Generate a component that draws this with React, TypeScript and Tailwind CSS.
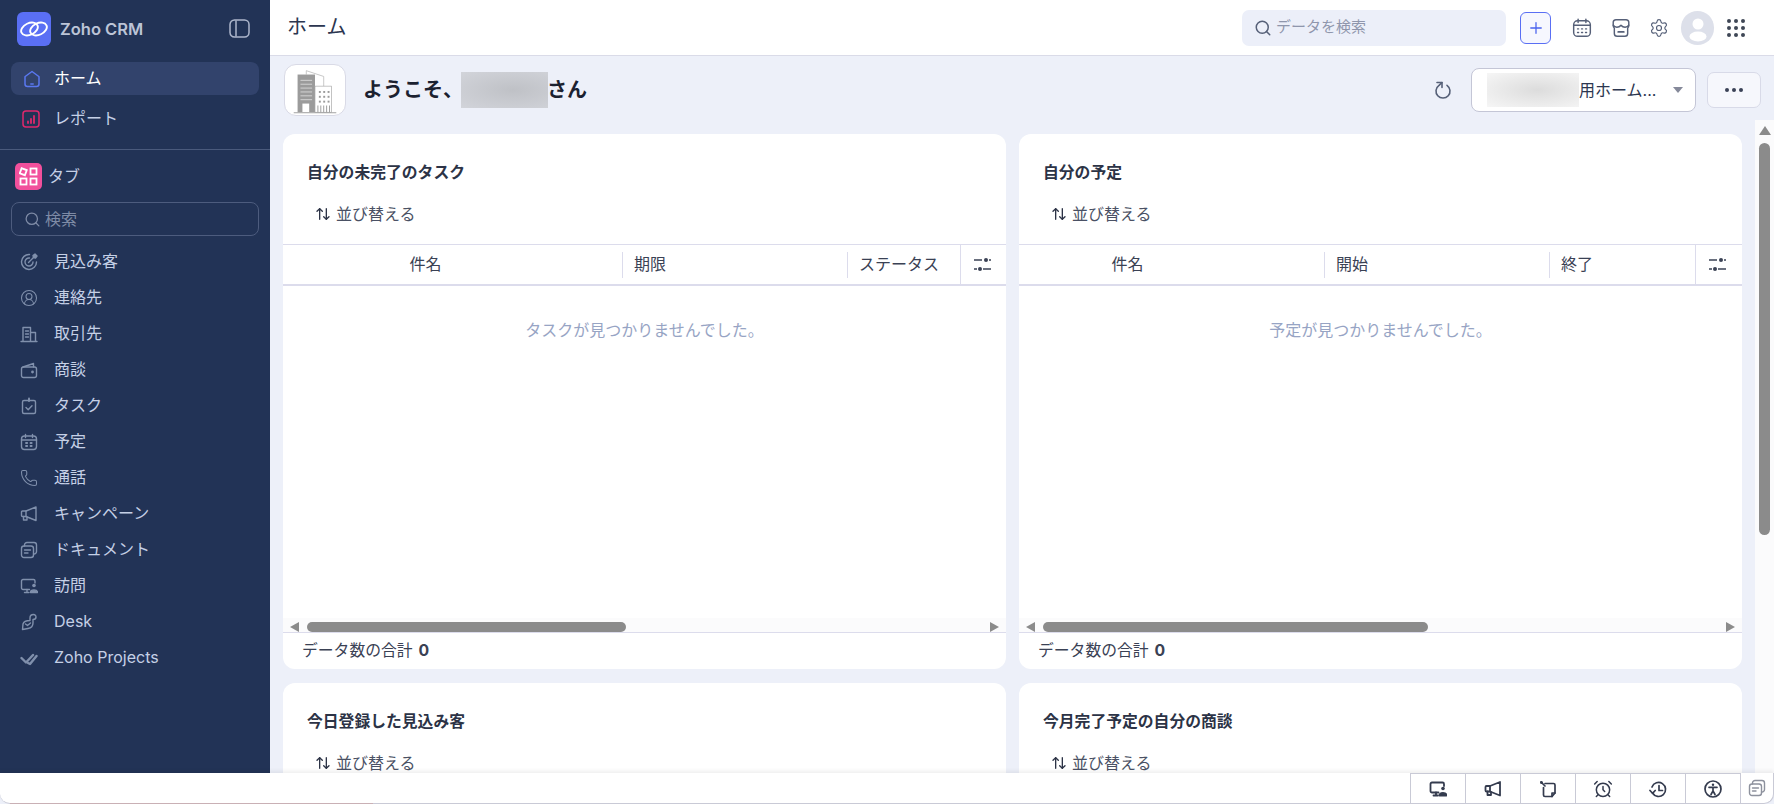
import { Search, Settings, Phone, Plus, CircleUserRound, ArrowUpDown, AlarmClock } from "lucide-react";
import type { ReactNode } from "react";

const FONT = "font-['Inter','Noto_Sans_CJK_JP',sans-serif]";

function Icon18({ children, size = 18, sw = 1.4 }: { children: ReactNode; size?: number; sw?: number }) {
  return (
    <svg
      width={size}
      height={size}
      viewBox="0 0 18 18"
      fill="none"
      stroke="currentColor"
      strokeWidth={sw}
      strokeLinecap="round"
      strokeLinejoin="round"
      className="shrink-0"
    >
      {children}
    </svg>
  );
}

const LeadIcon = () => (
  <Icon18>
    <path d="M9.500 1.500a7.500 7.500 0 1 0 7 7.500" />
    <path d="M9.500 5a4 4 0 1 0 3.500 4" />
    <path d="M8.500 9.500 14 4" />
    <path d="M13 2.500 13.500 4.500 15.500 5 17 3 15 1z" fill="currentColor" />
  </Icon18>
);
const ContactIcon = () => <CircleUserRound size={18} strokeWidth={1.4} />;
const BuildingIcon = () => (
  <Icon18>
    <path d="M3 16V2.500h7.500V16" />
    <path d="M10.500 7.500h5V16" />
    <path d="M1 16.500h16" />
    <path d="M5.500 6h3M5.500 9h3M5.500 12h3" />
  </Icon18>
);
const WalletIcon = () => (
  <Icon18>
    <rect x="1.500" y="6" width="15" height="10.500" rx="2" />
    <path d="M3 6 13.500 2.500V6" />
    <circle cx="12.500" cy="11" r="0.700" fill="currentColor" />
  </Icon18>
);
const TaskIcon = () => (
  <Icon18>
    <rect x="2.500" y="3.500" width="13" height="13" rx="1.500" />
    <path d="M9 1.500v2.500" strokeWidth="2" />
    <path d="m6 10.500 2.200 2.200 3.800-4" />
  </Icon18>
);
const CalendarIcon = () => (
  <Icon18>
    <rect x="1.500" y="3" width="15" height="13.500" rx="3" />
    <path d="M1.500 7h15M5.500 1.500v3M12.500 1.500v3" />
    <path d="M6 10h1.200M10.500 10h1.200M6 13h1.200M10.500 13h1.200" strokeWidth="1.800" />
  </Icon18>
);
const CallIcon = () => <Phone size={18} strokeWidth={1.4} />;
const CampaignIcon = ({ sw = 1.4 }: { sw?: number }) => (
  <Icon18 sw={sw}>
    <path d="M16 2 6 6H2.500a1 1 0 0 0-1 1v3.500a1 1 0 0 0 1 1H6l10 4z" />
    <path d="M6 6v5.500" />
    <path d="M3.500 11.500v3.500H7v-3" />
  </Icon18>
);
const DocIcon = () => (
  <Icon18>
    <rect x="1.500" y="5" width="12" height="11.500" rx="2.500" />
    <path d="M4.500 5V4a2.500 2.500 0 0 1 2.500-2.500h7A2.500 2.500 0 0 1 16.500 4v6.500A2.500 2.500 0 0 1 14 13h-.500" />
    <path d="M4.500 9h6M4.500 12h3.500" />
  </Icon18>
);
const VisitIcon = ({ sw = 1.4 }: { sw?: number }) => (
  <Icon18 sw={sw}>
    <path d="M9.500 12.500H3A1.500 1.500 0 0 1 1.500 11V4A1.500 1.500 0 0 1 3 2.500h10.500A1.500 1.500 0 0 1 15 4v2" />
    <path d="M7 12.500v3M4.500 15.500H9" />
    <circle cx="14" cy="8.500" r="1.800" fill="currentColor" stroke="none" />
    <path d="M10.500 15.500c0-3.500 7-3.500 7 0z" fill="currentColor" />
  </Icon18>
);
const DeskIcon = () => (
  <Icon18>
    <path d="M13.500 1.500c-2.500 0-3.500 1.200-3.500 3.500v2.500C6.500 7.500 3.500 9 3 11l-.500 5.500 5.500-1c3-.5 5-2.500 5-5.500V6.500c2 0 3-1 3-2.500 0-1.500-1-2.500-2.500-2.500z" />
    <path d="m5.500 11 2 1.500 3-2.500" />
  </Icon18>
);
const ProjectIcon = () => (
  <Icon18 sw={2.4}>
    <path d="m1.500 9 4.500 4.500L13 6" />
    <path d="m8 14 2 1 6.500-8" />
  </Icon18>
);

const navItems = [
  { label: "見込み客", icon: <LeadIcon /> },
  { label: "連絡先", icon: <ContactIcon /> },
  { label: "取引先", icon: <BuildingIcon /> },
  { label: "商談", icon: <WalletIcon /> },
  { label: "タスク", icon: <TaskIcon /> },
  { label: "予定", icon: <CalendarIcon /> },
  { label: "通話", icon: <CallIcon /> },
  { label: "キャンペーン", icon: <CampaignIcon /> },
  { label: "ドキュメント", icon: <DocIcon /> },
  { label: "訪問", icon: <VisitIcon /> },
  { label: "Desk", icon: <DeskIcon /> },
  { label: "Zoho Projects", icon: <ProjectIcon /> },
];

function ZohoLogo() {
  return (
    <div className="flex h-[34px] w-[34px] items-center justify-center rounded-[6px] bg-[#5a6ff4]">
      <svg width="28" height="20" viewBox="0 0 28 20" fill="none" stroke="white" strokeWidth="1.900">
        <ellipse cx="9.500" cy="10" rx="8.800" ry="5.800" transform="rotate(-25 9.500 10)" />
        <ellipse cx="18.500" cy="10" rx="8.800" ry="5.800" transform="rotate(-25 18.500 10)" />
      </svg>
    </div>
  );
}

function Sidebar() {
  return (
    <aside className="flex w-[270px] shrink-0 flex-col bg-[#223356]">
      <div className="flex h-[62px] items-start justify-between pl-[17px] pr-[19px] pt-[12px]">
        <div className="flex items-center gap-[9px]">
          <ZohoLogo />
          <span className="text-[16.500px] font-semibold text-[#bcc4d6]">Zoho CRM</span>
        </div>
        <svg width="22" height="20" viewBox="0 0 22 20" fill="none" stroke="#aeb7cc" strokeWidth="1.500" className="mt-[7px]">
          <rect x="1" y="1" width="19" height="17" rx="4.500" />
          <path d="M7 1.500v16" />
        </svg>
      </div>
      <div className="px-[11px]">
        <div className="flex h-[33px] items-center gap-[13px] rounded-[8px] bg-[#32436c] pl-[12px] text-[#5a78f0]">
          <Icon18 sw={1.5}>
            <path d="M9 1.500 15.800 6.500a1 1 0 0 1 .200.600V14a2.500 2.500 0 0 1-2.500 2.500h-9A2.500 2.500 0 0 1 2 14V7.100a1 1 0 0 1 .200-.600z" />
            <path d="M7.800 14h2.400" />
          </Icon18>
          <span className="pb-[2px] text-[16px] text-white">ホーム</span>
        </div>
        <div className="mt-[7px] flex h-[33px] items-center gap-[14px] pl-[11px] text-[#e0296c]">
          <Icon18 sw={1.5}>
            <rect x="1" y="1" width="16" height="16" rx="3" />
            <path d="M6 13v-1.500M9 13V9M12 13V6" strokeWidth="1.800" />
          </Icon18>
          <span className="pb-[2px] text-[16px] text-[#c5d0e6]">レポート</span>
        </div>
      </div>
      <div className="mt-[14px] border-t border-[#4a5a7c]" />
      <div className="mt-[13px] flex items-center gap-[6px] pl-[15px]">
        <div className="flex h-[27px] w-[27px] items-center justify-center rounded-[5px] bg-[#f2509c]">
          <svg width="19" height="19" viewBox="0 0 19 19" fill="none" stroke="white" strokeWidth="1.800">
            <rect x="1.500" y="2" width="5.500" height="5.500" transform="rotate(20 4.250 4.750)" />
            <rect x="11.500" y="1.500" width="6" height="6" />
            <rect x="1.500" y="11.500" width="6" height="6" />
            <rect x="11.500" y="11.500" width="6" height="6" />
          </svg>
        </div>
        <span className="pb-[2px] text-[16px] text-[#c5d0e6]">タブ</span>
      </div>
      <div className="mx-[11px] mt-[12px] flex h-[34px] items-center gap-[4px] rounded-[8px] border border-[#4d5c7e] pl-[12px]">
        <Search size={17} strokeWidth={1.8} className="text-[#7e8ba6]" />
        <span className="text-[16px] text-[#7e8ba6]">検索</span>
      </div>
      <div className="mt-[8px]">
        {navItems.map(({ label, icon }) => (
          <div key={label} className="flex h-[36px] items-center gap-[16px] pl-[20px]">
            <span className="text-[#8090ac]">{icon}</span>
            <span className="pb-[2px] text-[16px] text-[#c5d0e6]">{label}</span>
          </div>
        ))}
      </div>
    </aside>
  );
}

function TopBar() {
  return (
    <header className="flex h-[56px] shrink-0 items-center justify-between border-b border-[#dadbe8] bg-white pl-[17px] pr-[29px]">
      <span className="pb-[2px] text-[20px] text-[#2c3650]">ホーム</span>
      <div className="flex items-center text-[#566078]">
        <div className="flex h-[36px] w-[264px] items-center gap-[4px] rounded-[7px] bg-[#eceff9] pl-[12px]">
          <Search size={18} strokeWidth={2} className="text-[#566078]" />
          <span className="text-[15px] text-[#8f96ac]">データを検索</span>
        </div>
        <div className="ml-[14px] flex h-[32px] w-[31px] items-center justify-center rounded-[6px] border border-[#5a6ff4] bg-[#f6f7fe]">
          <Plus size={18} strokeWidth={1.7} className="text-[#4a63ee]" />
        </div>
        <div className="ml-[21px]">
          <Icon18 size={20} sw={1.3}>
            <rect x="1.500" y="2.500" width="15" height="14" rx="3.500" />
            <path d="M1.500 6.500h15M5.500 1v3M12.500 1v3" />
            <path d="M5 9.800h.9M8.600 9.800h.9M12.200 9.800h.9M5 13h.9M8.600 13h.9M12.200 13h.9" />
          </Icon18>
        </div>
        <div className="ml-[19px]">
          <Icon18 size={20} sw={1.3}>
            <path d="M4.500 1.500h9a2.500 2.500 0 0 1 2.500 2V7a2.500 2.500 0 0 1-1 2v5a2.500 2.500 0 0 1-2.500 2.500h-7A2.500 2.500 0 0 1 3 14V9a2.500 2.500 0 0 1-1-2V3.500a2.500 2.500 0 0 1 2.500-2z" />
            <path d="M2 6.500c1.500 2.500 5 2.500 7 0 2 2.500 5.500 2.500 7 0" />
            <path d="M6.500 12.500h5" strokeWidth="1.600" />
          </Icon18>
        </div>
        <Settings size={20} strokeWidth={1.4} className="ml-[18px]" />
        <div className="ml-[12px] flex h-[34px] w-[33px] items-center justify-center overflow-hidden rounded-full bg-[#dde0ea]">
          <svg width="24" height="28" viewBox="0 0 24 28" fill="white">
            <circle cx="12" cy="10" r="5.500" />
            <ellipse cx="12" cy="22.500" rx="8.500" ry="5" />
          </svg>
        </div>
        <svg width="18" height="18" viewBox="0 0 18 18" fill="#3f4756" className="ml-[13px]">
          {[2, 9, 16].map((y) =>
            [2, 9, 16].map((x) => <circle key={`${x}-${y}`} cx={x} cy={y} r="2" />)
          )}
        </svg>
      </div>
    </header>
  );
}

function BuildingLogo() {
  return (
    <svg width="62" height="51" viewBox="0 0 62 51">
      <path d="M22 9V5l18 6v11" fill="none" stroke="#b8b8b8" strokeWidth="0.800" />
      <rect x="13" y="9" width="18" height="39" fill="#9b9b9b" />
      <path d="M16 15h12M16 19h12M16 23h12M16 27h12M16 31h12M16 35h12" stroke="#d4d4d4" strokeWidth="1" />
      <rect x="18" y="39" width="7" height="9" fill="white" />
      <rect x="31" y="21" width="17" height="27" fill="white" stroke="#a8a8a8" strokeWidth="0.700" />
      {[26, 31, 36].map((y) =>
        [35, 39.500, 44].map((x) => <rect key={`${x}-${y}`} x={x} y={y} width="2" height="2" fill="#9b9b9b" />)
      )}
      <path d="M34 41v7M37 41v7M40 41v7M43 41v7M46 41v7" stroke="#9b9b9b" strokeWidth="1" />
      <rect x="9" y="48" width="44" height="1" fill="#a0a0a0" />
    </svg>
  );
}

function WelcomeRow() {
  return (
    <div className="flex h-[68px] shrink-0 items-center justify-between pl-[14px] pr-[13px]">
      <div className="flex items-center">
        <div className="flex h-[52px] w-[62px] items-center justify-center overflow-hidden rounded-[12px] border border-[#d9dae6] bg-white">
          <BuildingLogo />
        </div>
        <span className="ml-[17px] mr-[-2px] text-[20px] font-semibold text-[#1b2130]">ようこそ、</span>
        <div className="mr-[-1px] h-[36px] w-[87px] bg-[radial-gradient(ellipse_at_60%_50%,#bfc1c6,#d2d4da)]" />
        <span className="text-[20px] font-semibold text-[#1b2130]">さん</span>
      </div>
      <div className="flex items-center">
        <svg width="18" height="18" viewBox="0 0 18 18" fill="none" stroke="#566078" strokeWidth="1.600" strokeLinecap="round" strokeLinejoin="round">
          <path d="M13 4.300A7 7 0 1 1 5 4.300L8 1.500" />
          <path d="M3 1.500h5v5" />
        </svg>
        <div className="ml-[19px] flex h-[44px] w-[225px] items-center justify-between rounded-[8px] border border-[#c4c6d6] bg-white pl-[15px] pr-[12px]">
          <div className="flex items-center">
            <div className="h-[34px] w-[92px] bg-[radial-gradient(ellipse_at_55%_50%,#dcdcdc,#f6f6f6)]" />
            <span className="text-[16px] text-[#2c3650]">用ホーム...</span>
          </div>
          <div className="h-0 w-0 border-x-[5px] border-t-[6px] border-x-transparent border-t-[#85899a]" />
        </div>
        <div className="ml-[11px] flex h-[36px] w-[54px] items-center justify-center rounded-[7px] border border-[#d8dae8] bg-[#f6f7fc]">
          <span className="flex gap-[3px]">
            <i className="h-[4px] w-[4px] rounded-full bg-[#3a4256]" />
            <i className="h-[4px] w-[4px] rounded-full bg-[#3a4256]" />
            <i className="h-[4px] w-[4px] rounded-full bg-[#3a4256]" />
          </span>
        </div>
      </div>
    </div>
  );
}

type CardProps = {
  title: string;
  columns?: [string, string];
  empty?: string;
  firstColClass?: string;
  thirdColClass?: string;
  thumbClass?: string;
};

function Card({ title, columns, empty, firstColClass, thirdColClass, thumbClass }: CardProps) {
  return (
    <section className="flex h-[535px] min-w-0 flex-1 flex-col rounded-[12px] bg-white">
      <h2 className="mt-[29px] pl-[24px] text-[15.800px] font-bold leading-[20px] text-[#2c3346]">{title}</h2>
      <div className="mt-[21px] flex h-[20px] items-center gap-[5px] pl-[32px] text-[#4a5164]">
        <ArrowUpDown size={16} strokeWidth={2} className="text-[#2c3346]" />
        <span className="text-[16px]">並び替える</span>
      </div>
      {columns && (
        <>
          <div className="mt-[20px] flex h-[42px] items-center border-t border-b-2 border-[#dcdcec] text-[16px] text-[#3a4154]">
            <div className={`flex h-[26px] items-center justify-center pb-[2px] ${firstColClass}`}>件名</div>
            <div className="flex h-[26px] w-[225px] shrink-0 items-center border-l border-[#dcdcec] pb-[2px] pl-[11px]">{columns[0]}</div>
            <div className={`flex h-[26px] shrink-0 items-center border-l border-[#dcdcec] pb-[2px] pl-[11px] ${thirdColClass}`}>{columns[1]}</div>
            <div className="flex h-full flex-1 items-center justify-center border-l border-[#dcdcec] pr-[3px]">
              <svg width="17" height="13" viewBox="0 0 17 13" fill="none" stroke="#3a4154" strokeWidth="1.400">
                <path d="M0 2h8M15 2h2M0 11h3M9 11h8" />
                <circle cx="12" cy="2" r="2" fill="#3a4154" stroke="none" />
                <circle cx="6" cy="11" r="2" fill="#3a4154" stroke="none" />
              </svg>
            </div>
          </div>
          <p className="mt-[32px] flex-1 text-center text-[16px] leading-[24px] text-[#97a4c4]">{empty}</p>
          <div className="flex h-[15px] items-end border-b border-[#dcdcec] bg-[#fbfbfc] px-[7px]">
            <div className="h-0 w-0 shrink-0 border-y-[5px] border-r-[9px] border-y-transparent border-r-[#8b8b8b]" />
            <div className="mx-[8px] h-[10px] flex-1">
              <div className={`h-[10px] rounded-full bg-[#8b8b8b] ${thumbClass}`} />
            </div>
            <div className="h-0 w-0 shrink-0 border-y-[5px] border-l-[9px] border-y-transparent border-l-[#8b8b8b]" />
          </div>
          <div className="flex h-[36px] items-center gap-[6px] pl-[19px] text-[15.800px] text-[#3a4154]">
            データ数の合計 <b className="font-bold">0</b>
          </div>
        </>
      )}
    </section>
  );
}

function BottomBar() {
  const icons = [
    <VisitIcon sw={1.8} />,
    <CampaignIcon sw={1.8} />,
    <Icon18 sw={1.7}>
      <path d="M6 3.500h8.500a1.500 1.500 0 0 1 1.500 1.500v8l-3 3.500H6a1.500 1.500 0 0 1-1.500-1.500V7.500" />
      <path d="M2 2l4 4" />
      <circle cx="2.500" cy="2.500" r="1.500" fill="currentColor" stroke="none" />
      <path d="M13 16.500V13h3" />
    </Icon18>,
    <AlarmClock size={20} strokeWidth={1.800} />,
    <Icon18 sw={1.7}>
      <path d="M3.500 13a7 7 0 1 0-.500-6" />
      <path d="M1 10.500l2.500 2.800 2.700-2.800" />
      <path d="M10 5.500v5h3.500" />
    </Icon18>,
    <Icon18 sw={1.7}>
      <circle cx="9" cy="9" r="8" />
      <circle cx="9" cy="4.800" r="1.200" fill="currentColor" stroke="none" />
      <path d="M5 7.300h8M9 7.300v3.500M9 10.800l-2 3.700M9 10.800l2 3.700" />
    </Icon18>,
  ];
  return (
    <footer className="relative flex h-[31px] shrink-0 items-stretch justify-end rounded-b-[10px] border-b border-r border-[#c9cad6] bg-white shadow-[0_-2px_4px_rgba(0,0,0,0.07)]">
      {icons.map((icon, i) => (
        <div key={i} className="flex w-[55px] items-center justify-center border-l border-t border-[#c9cad6] text-[#343b4e]">
          {icon}
        </div>
      ))}
      <div className="flex w-[33px] items-center justify-center border-l border-[#c9cad6] text-[#8d919d]">
        <DocIcon />
      </div>
      <div className="absolute bottom-[-1px] left-[10px] h-px w-[363px] bg-[#c9b0b5]" />
    </footer>
  );
}

export default function App() {
  return (
    <div className={`flex h-[804px] w-[1774px] flex-col overflow-hidden bg-[#edf0f9] ${FONT}`}>
      <div className="flex min-h-0 flex-1">
        <Sidebar />
        <main className="flex min-w-0 flex-1 flex-col">
          <TopBar />
          <WelcomeRow />
          <div className="flex min-h-0 flex-1">
            <div className="min-w-0 flex-1 overflow-hidden pl-[13px] pr-[13px] pt-[10px]">
              <div className="flex gap-[13px]">
                <Card
                  title="自分の未完了のタスク"
                  columns={["期限", "ステータス"]}
                  empty="タスクが見つかりませんでした。"
                  firstColClass="w-[339px] shrink-0 pr-[54px]"
                  thirdColClass="w-[113px]"
                  thumbClass="w-[319px]"
                />
                <Card
                  title="自分の予定"
                  columns={["開始", "終了"]}
                  empty="予定が見つかりませんでした。"
                  firstColClass="w-[305px] shrink-0 pr-[88px]"
                  thirdColClass="w-[146px]"
                  thumbClass="w-[385px]"
                />
              </div>
              <div className="mt-[14px] flex gap-[13px]">
                <Card title="今日登録した見込み客" />
                <Card title="今月完了予定の自分の商談" />
              </div>
            </div>
            <div className="-mt-[4px] flex w-[19px] shrink-0 flex-col items-center bg-[#fbfbfc] pt-[6px]">
              <div className="h-0 w-0 border-x-[6px] border-b-[9px] border-x-transparent border-b-[#8b8b8b]" />
              <div className="mt-[8px] h-[392px] w-[11px] rounded-full bg-[#8b8b8b]" />
            </div>
          </div>
        </main>
      </div>
      <BottomBar />
    </div>
  );
}
